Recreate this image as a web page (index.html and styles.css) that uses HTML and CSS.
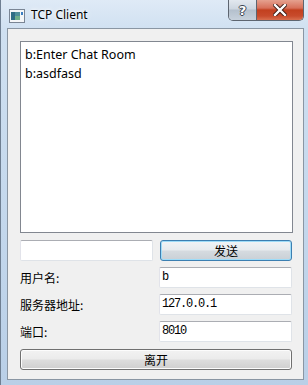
FILE: index.html
```html
<!DOCTYPE html>
<html>
<head>
<meta charset="utf-8">
<link rel="stylesheet" href="styles.css">
</head>
<body>
<div class="window">
  <div class="titlebar">
    <svg class="app-icon" width="16" height="14" viewBox="0 0 16 14">
      <rect x="0.5" y="0.5" width="15" height="13" fill="#f4f6f8" stroke="#7a8594"/>
      <rect x="2" y="3" width="9" height="8" fill="#4f8f9a"/>
      <rect x="2" y="3" width="4" height="8" fill="#2f6d85"/>
      <rect x="6" y="7" width="5" height="4" fill="#6fae8a"/>
      <rect x="12" y="3" width="2" height="3" fill="#3d7fc2"/>
    </svg>
    <span class="title">TCP Client</span>
    <div class="caption-buttons">
      <div class="cbtn help">?</div>
      <div class="cbtn close">
        <svg width="14" height="12" viewBox="0 0 14 12">
          <path d="M2 1 L12 11 M12 1 L2 11" stroke="#3a1a14" stroke-width="4.2" stroke-linecap="square"/>
          <path d="M2 1 L12 11 M12 1 L2 11" stroke="#ffffff" stroke-width="2.4" stroke-linecap="square"/>
        </svg>
      </div>
    </div>
  </div>
  <div class="client">
    <div class="chat">
      <div class="msg">b:Enter Chat Room</div>
      <div class="msg">b:asdfasd</div>
    </div>
    <div class="send-row">
      <div class="edit"></div>
      <div class="button default">发送</div>
    </div>
    <div class="form">
      <div class="label">用户名:</div>
      <div class="edit field">b</div>
      <div class="label">服务器地址:</div>
      <div class="edit field">127.0.0.1</div>
      <div class="label">端口:</div>
      <div class="edit field">8010</div>
    </div>
    <div class="button leave">离开</div>
  </div>
</div>
</body>
</html>
```

FILE: styles.css
```css
html, body {
  margin: 0;
  padding: 0;
}
body {
  width: 308px;
  height: 385px;
  overflow: hidden;
  background: #c9dbee;
}
.window {
  width: 308px;
  height: 385px;
  box-sizing: border-box;
  background: linear-gradient(180deg, #dfeaf6 0%, #cfe0f1 8%, #c3d7ec 60%, #b9cfe7 100%);
  display: flex;
  flex-direction: column;
  border-left: 1px solid #6f7f92;
}
.titlebar {
  height: 28px;
  display: flex;
  align-items: flex-start;
  position: relative;
}
.app-icon {
  margin: 9px 0 0 8px;
}
.title {
  margin: 6px 0 0 6px;
  font-family: "Noto Sans", sans-serif;
  font-size: 12px;
  color: #000;
  text-shadow: 0 0 6px #ffffff, 0 0 3px #ffffff;
}
.caption-buttons {
  margin-left: auto;
  margin-right: 4px;
  display: flex;
  border: 1px solid #5d6570;
  border-top: none;
  border-radius: 0 0 5px 5px;
  overflow: hidden;
  height: 20px;
}
.cbtn {
  height: 20px;
  display: flex;
  align-items: center;
  justify-content: center;
}
.help {
  width: 27px;
  border-right: 1px solid #5d6570;
  background: linear-gradient(180deg, #e2e8ef 0%, #cdd6e0 45%, #b4c0cd 50%, #c7d1dc 100%);
  font-family: "DejaVu Sans", sans-serif;
  font-weight: bold;
  font-size: 13px;
  color: #fff;
  text-shadow: 1px 0 0 #3b4350, -1px 0 0 #3b4350, 0 1px 0 #3b4350, 0 -1px 0 #3b4350;
}
.close {
  width: 46px;
  background: linear-gradient(180deg, #e5a18f 0%, #d7705a 40%, #c2401f 50%, #c84b2c 80%, #d86f4f 100%);
}
.client {
  margin-left: 6px;
  width: 297px;
  height: 352px;
  box-sizing: border-box;
  border: 1px solid #8a96a3;
  background: #f0f0f0;
  padding: 12px 10px 0 12px;
  display: flex;
  flex-direction: column;
}
.chat {
  height: 192px;
  box-sizing: border-box;
  border: 1px solid #828790;
  background: #fff;
  padding: 3px 4px;
}
.msg {
  font-family: "Noto Sans", "Noto Sans CJK SC", sans-serif;
  font-size: 12.5px;
  line-height: 19px;
  color: #000;
}
.send-row {
  margin-top: 7px;
  display: flex;
  gap: 7px;
  height: 21px;
}
.send-row .edit {
  width: 133px;
}
.edit {
  box-sizing: border-box;
  height: 21px;
  background: #fff;
  border: 1px solid #dfe3e8;
  border-top-color: #abadb3;
  border-left-color: #e2e3ea;
  border-radius: 2px;
}
.button {
  box-sizing: border-box;
  height: 21px;
  border: 1px solid #707070;
  border-radius: 3px;
  background: linear-gradient(180deg, #f2f2f2 0%, #ebebeb 48%, #dddddd 52%, #cfcfcf 100%);
  box-shadow: inset 0 0 0 1px #fcfcfc;
  display: flex;
  align-items: center;
  justify-content: center;
  font-family: "Noto Sans CJK SC", sans-serif;
  font-size: 12px;
  color: #000;
}
.button.default {
  width: 132px;
  border-color: #3c7fb1;
  box-shadow: inset 0 0 0 1px #9edcf8;
  background: linear-gradient(180deg, #f1f4f6 0%, #e7ebee 48%, #d6dbe0 52%, #c9d0d6 100%);
}
.form {
  margin-top: 6px;
  display: grid;
  grid-template-columns: 139px 133px;
  row-gap: 6px;
}
.label {
  font-family: "Noto Sans CJK SC", sans-serif;
  font-size: 12px;
  line-height: 21px;
  color: #000;
}
.field {
  font-family: "Liberation Mono", monospace;
  font-size: 12px;
  letter-spacing: -1.2px;
  line-height: 19px;
  padding-left: 2px;
  color: #000;
}
.leave {
  margin-top: 7px;
  width: 272px;
}
```
